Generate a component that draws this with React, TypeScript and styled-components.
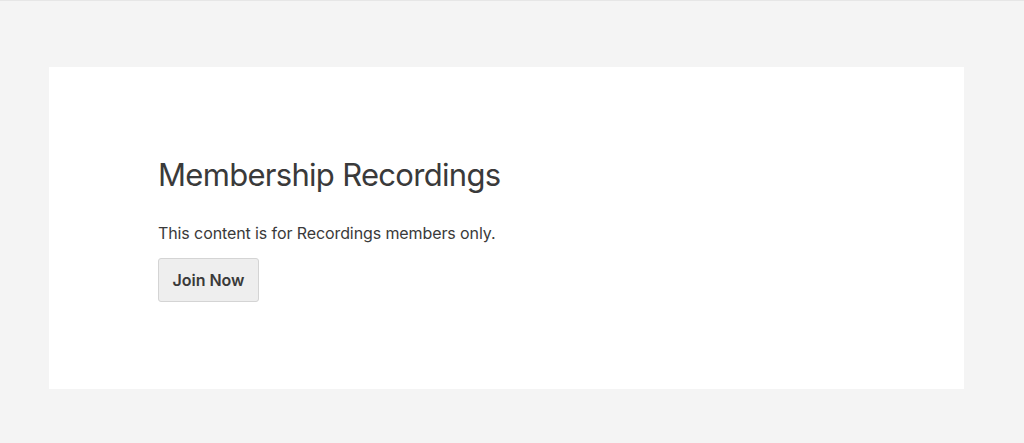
import styled, { createGlobalStyle } from 'styled-components';

const GlobalStyle = createGlobalStyle`
  html, body {
    margin: 0;
    padding: 0;
    background: #f4f4f4;
  }
  body {
    font-family: Inter, "Liberation Sans", sans-serif;
    color: #3a3a3a;
    border-top: 1px solid #e6e6e6;
  }
`;

export default function App() {
  return (
    <>
      <GlobalStyle />
      <Page>
        <Card>
          <Title>Membership Recordings</Title>
          <Message>This content is for Recordings members only.</Message>
          <JoinButton type="button">Join Now</JoinButton>
        </Card>
      </Page>
    </>
  );
}

const Page = styled.div`
  padding: 66px 60px 54px 49px;
`;

const Card = styled.div`
  background: #ffffff;
  height: 322px;
  box-sizing: border-box;
  padding: 88px 109px 0;
`;

const Title = styled.h1`
  margin: 0;
  font-size: 31px;
  font-weight: 400;
  line-height: 40px;
  letter-spacing: -0.7px;
  color: #3a3a3a;
`;

const Message = styled.p`
  margin: 27px 0 14px;
  font-size: 16px;
  line-height: 22px;
  letter-spacing: -0.1px;
`;

const JoinButton = styled.button`
  font-family: inherit;
  font-size: 16px;
  font-weight: 600;
  color: #3a3a3a;
  background: #eeeeee;
  border: 1px solid #d4d4d4;
  border-radius: 3px;
  width: 101px;
  height: 44px;
  padding: 0;
`;
